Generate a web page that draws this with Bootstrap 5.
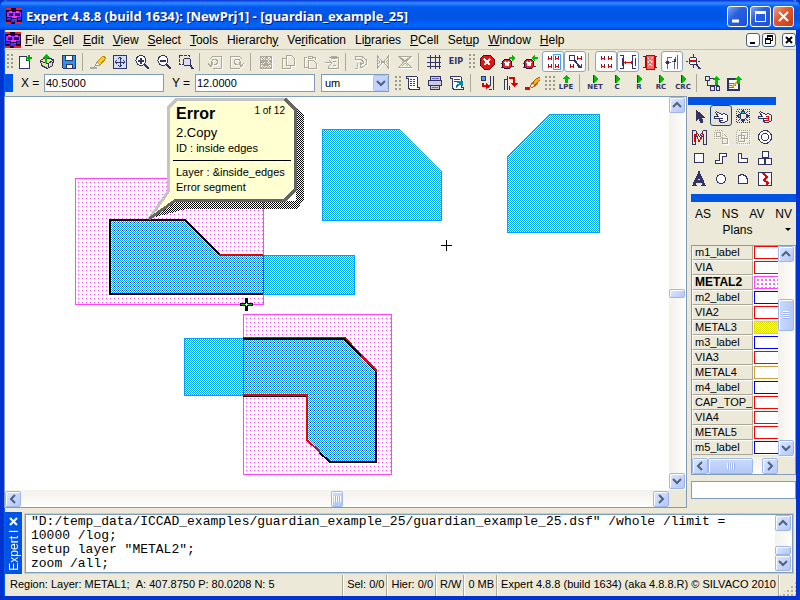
<!DOCTYPE html>
<html lang="en">
<head>
<meta charset="utf-8">
<meta name="viewport" content="width=device-width, initial-scale=1">
<title>Expert 4.8.8 (build 1634): [NewPrj1] - [guardian_example_25]</title>
<link href="https://cdn.jsdelivr.net/npm/bootstrap@5.3.0/dist/css/bootstrap.min.css" rel="stylesheet">
<style>
:root { --face:#ece9d8; --edge:#7f9db9; --shade:#aca899; --xp:#0054e3; --ink:#333366; }
body { font-family:"Liberation Sans",Arial,sans-serif; font-size:12px; line-height:14px; color:#000; background:#0046d5; }
.app { min-height:100vh; background:var(--face); border:solid #0033d0; border-width:0 4px 4px; box-shadow:inset 1px 0 #0a5cf0; }
button { color:inherit; }
.titlebar { height:30px; margin:0 -4px; padding:2px 6px 0; background:linear-gradient(#0831d9 0,#2f8cff 3px,#0058ee 7px,#0054e3 60%,#0066ff 86%,#0058ee 93%,#003dd7 100%); border-radius:7px 7px 0 0; color:#fff; }
.titlebar h1 { font:bold 13px/18px "Noto Sans","Open Sans",sans-serif; margin:0; text-shadow:1px 1px #0a1883; white-space:nowrap; }
.winbtns { gap:2px; }
.winbtn { width:21px; height:21px; padding:0; border:1px solid #fff; border-radius:3px; background:linear-gradient(135deg,#7aa4f8,#2a5fe0 40%,#1c50d8); display:block; }
.winbtn.quit { background:linear-gradient(135deg,#f0a088,#e25a30 40%,#c83c10); }
.winbtn svg { display:block; width:19px; height:19px; }
.menus { height:20px; padding-left:1px; border-bottom:1px solid #c5c2b0; }
.menus .nav { gap:9px; }
.menus .nav-link { padding:0; color:#000; }
.mdi { width:14px; height:14px; padding:0; border:1px solid #4d6185; border-radius:3px; background:#fff; display:block; }
.mdi svg { display:block; width:12px; height:12px; }
.bar { height:23px; padding-left:1px; }
.bar.low { padding-bottom:3px; }
.tool { width:22px; height:21px; padding:0; border:1px solid transparent; border-radius:3px; background:none; display:flex; align-items:center; justify-content:center; flex:none; }
.tool.on { background:#fff; border-color:#8aa5c0; }
.tool svg, .ic { width:16px; height:16px; fill:none; stroke:var(--ink); stroke-width:1; shape-rendering:crispEdges; flex:none; }
.tool.dim svg { stroke:var(--shade); filter:drop-shadow(1px 1px #fff); }
.tool b { font:bold 7px/7px "DejaVu Sans",sans-serif; color:var(--ink); }
.tool b.eip { font-size:8px; }
.tool.cap { flex-direction:column; }
.tool.cap svg { width:9px; height:9px; }
.sep { width:7px; height:18px; background:linear-gradient(var(--shade),var(--shade)) 2px 0/1px 100% no-repeat; flex:none; }
.sep.w9 { width:9px; }
.grip { width:9px; height:15px; flex:none; background:radial-gradient(circle at 1px 1px,#9d9a8a 1px,transparent 1px) 2px 0/4px 4px; }
.grip.w12 { width:12px; }
.dock { width:8px; height:18px; background:var(--xp); flex:none; }
.fld { height:18px; border:1px solid var(--edge); background:#fff; padding:0 1px; font-size:11px; line-height:14px; border-radius:0; color:#000; }
.coord { width:120px; }
.axis { width:23px; }
.unit { width:68px; padding-left:3px; appearance:none; background:#fff; }
.unitwrap { position:relative; margin-left:6px; }
.unitwrap svg { position:absolute; right:1px; top:1px; width:15px; height:16px; pointer-events:none; }
.frame { border:1px solid var(--edge); display:grid; }
.view { grid-template:minmax(0,1fr) 17px / minmax(0,1fr) 17px; background:var(--face); }
.sheet { background:#fff; position:relative; overflow:hidden; }
.sheet > svg { display:block; width:100%; height:100%; position:absolute; left:0; top:0; shape-rendering:crispEdges; }
.sb { display:flex; background:linear-gradient(90deg,#f3f1ec,#fefefb); }
.sb.v { flex-direction:column; padding:0 1px 1px 0; }
.sb.h { background:linear-gradient(#f3f1ec,#fefefb); padding:1px 0 0; }
.sb button, .thumb { width:16px; height:16px; flex:none; border:1px solid #9db7ea; border-radius:2px; background:linear-gradient(135deg,#dce7ff,#b4c8f6); box-shadow:inset 1px 1px #fff; padding:0; display:block; }
.sb button svg { display:block; width:14px; height:14px; fill:none; stroke:#4d6185; stroke-width:2; }
.thumb.v9 { height:9px; }
.thumb.h12 { width:12px; background:repeating-linear-gradient(90deg,#fff 0 1px,#9cb4ee 1px 2px) 2px 4px/7px 6px no-repeat,linear-gradient(#cbdafd,#b4c8f6); }
.thumb.long { flex:5 1 0; background:repeating-linear-gradient(90deg,#fff 0 1px,#9cb4ee 1px 2px) center/8px 6px no-repeat,linear-gradient(#cbdafd,#b4c8f6); }
.thumb.v32 { height:32px; background:repeating-linear-gradient(#fff 0 1px,#9cb4ee 1px 2px) center/6px 8px no-repeat,linear-gradient(90deg,#cbdafd,#b4c8f6); }
.grow1 { flex:1 1 0; } .grow3 { flex:3 1 0; }
.note { position:absolute; left:162px; top:1px; width:128px; height:103px; padding:6px 4px 0 9px; color:#000; font-size:11px; line-height:15px; }
.note h2 { font-size:16px; line-height:20px; font-weight:bold; margin:0; }
.note .copy { font-size:13px; line-height:17px; }
.note .count { font-size:10px; line-height:14px; padding-right:6px; }
.note hr { margin:4px 0 4px -3px; border-top:1px solid #000; opacity:1; }
.side { width:109px; flex:none; padding:1px 0 0 1px; }
.lower { padding:5px 0 0 3px; }
.strip { height:8px; background:var(--xp); }
.strip.short { width:88px; }
.tools4 { display:grid; grid-template-columns:repeat(4,22px); }
.tools4 .on { border-color:#1c4a78; background:#e4e2d8; }
.flat { border:0; padding:0; background:none; font-size:12px; line-height:16px; }
.layers { grid-template:minmax(0,1fr) 17px / minmax(0,1fr) 17px; height:230px; margin-top:7px; background:var(--face); }
.layerbox { overflow:hidden; }
.layerbox table { width:100%; margin-top:-1px; table-layout:fixed; border-collapse:separate; border-spacing:0; font-size:11px; line-height:13px; }
.layerbox th { width:61px; height:15px; padding:0 0 0 2px; font-weight:normal; border:1px solid; border-color:#fff var(--shade) var(--shade) #fff; overflow:hidden; white-space:nowrap; }
.layerbox th.cur { font-weight:bold; font-size:12px; }
.layerbox td { height:15px; padding:1px 0 1px 1px; background:#fff; }
.swatch { display:block; height:13px; border:1px solid red; border-right:0; background:#fff; }
.swatch.bl { border-color:#00f; }
.swatch.or { border-color:#d0a040; }
.swatch.mg { border-color:#f4f; background:conic-gradient(#fff 75%,#f6f 0) 0 0/4px 4px; background:linear-gradient(#f6f,#f6f) 0 0/0 0,radial-gradient(circle at 1px 1px,#f6f 1px,#fff 1px) 2px 2px/4px 4px; }
.swatch.ye { border-color:#dddd00; background:repeating-conic-gradient(#dddd00 0 25%,#fff 0 50%) 0 0/2px 2px; }
.find { margin-top:6px; }
.console { height:67px; padding:4px 3px 1px 1px; }
.ctab { width:17px; background:var(--xp); color:#fff; font-size:12px; }
.ctab span { writing-mode:vertical-rl; transform:rotate(180deg); }
.ctab button { border:0; background:none; padding:0; width:17px; height:18px; color:#fff; display:flex; align-items:center; justify-content:center; }
.cbox { border:1px solid var(--edge); outline:1px solid #cfccbb; background:#fff; margin:2px 0 1px 3px; }
.cbox textarea { border:0; resize:none; overflow:hidden; padding:0 0 0 5px; font:13px/14px "Liberation Mono",monospace; color:#000; background:#fff; display:block; outline:0; }
.status { height:21px; font-size:11px; line-height:19px; padding-left:6px; white-space:nowrap; }
.status .pane { border-right:1px solid var(--shade); box-shadow:1px 0 #fff; padding:0 2px 0 4px; }
.sizer { width:17px; height:14px; background:radial-gradient(circle at 1px 1px,#b0ad9c 1px,transparent 1px) 0 0/4px 4px; clip-path:polygon(100% 0,100% 100%,0 100%); }
</style>
<script src="https://cdn.jsdelivr.net/npm/bootstrap@5.3.0/dist/js/bootstrap.bundle.min.js"></script>
</head>
<body>
<svg width="0" height="0" class="position-absolute" aria-hidden="true">
  <defs>
    <symbol id="app" viewBox="0 0 16 16"><rect width="16" height="16" fill="#203" stroke="none"/><path d="M0 1h5M10 1h6M0 15h5M9 15h7" stroke="#e22" stroke-width="2"/><path d="M1 4h14v5H1z" fill="#a3f" stroke="none"/><path d="M3 5h4v3H3zM9 5h5v3H9z" fill="#20106a" stroke="none"/><path d="M3 4h3M10 4h3M6 9h5" stroke="#f3e" stroke-width="2"/><path d="M1 11h4M12 11h3M5 13h6" stroke="#33f" stroke-width="2"/><path d="M6 11h5" stroke="#e22"/></symbol>
    <symbol id="up" viewBox="0 0 14 14"><path d="M3 9l4-4 4 4"/></symbol>
    <symbol id="down" viewBox="0 0 14 14"><path d="M3 5l4 4 4-4"/></symbol>
    <symbol id="left" viewBox="0 0 14 14"><path d="M9 3L5 7l4 4"/></symbol>
    <symbol id="right" viewBox="0 0 14 14"><path d="M5 3l4 4-4 4"/></symbol>
    <symbol id="play" viewBox="0 0 9 9"><path d="M2 0v8h1l4-4-4-4z" fill="#0b0" stroke="none"/><path d="M2.500 0v8"/></symbol>
    <symbol id="devs" viewBox="0 0 16 16"><path d="M3.500 2v4M6.500 2v4M10.500 2v4M13.500 2v4M3.500 10v4M6.500 10v4M10.500 10v4M13.500 10v4"/><path d="M3 4.500h4M10 4.500h4M3 12.500h4M10 12.500h4" stroke="#e00"/></symbol>
    <symbol id="hand" viewBox="0 0 16 16"><path d="M1.500 8.500h4l-3-4 1-1 5 3 3-1 3 2v5l-3 2H8l-2-2v-2H2z" fill="#fff"/><path d="M7 10.500h3M7 12.500h3"/></symbol>
    <symbol id="errx" viewBox="0 0 16 16"><path d="M3.500 5.500h5l2 2v5l-2 2h-5l-2-2v-5z" fill="#e22" stroke="#203"/><path d="M4 8l4 4M8 8l-4 4" stroke="#fff" stroke-width="2"/><path d="M0 9.500h2M0 13.500h2M10 12.500h3"/></symbol>
  </defs>
</svg>

<div class="app d-flex flex-column">
  <header class="titlebar d-flex align-items-center flex-shrink-0">
    <svg class="ic"><use href="#app"/></svg>
    <h1 class="flex-grow-1 ps-1">Expert 4.8.8 (build 1634): [NewPrj1] - [guardian_example_25]</h1>
    <div class="winbtns d-flex">
      <button class="winbtn" aria-label="Minimize"><svg><path d="M4 14h7" stroke="#fff" stroke-width="3"/></svg></button>
      <button class="winbtn" aria-label="Maximize"><svg><path d="M4 5.500h11M4.500 6v9M14.500 6v9M4 14.500h11M4 4.500h11M4 6.500h11" stroke="#fff" fill="none"/></svg></button>
      <button class="winbtn quit" aria-label="Close"><svg><path d="M5 5l9 9M14 5l-9 9" stroke="#fff" stroke-width="2"/></svg></button>
    </div>
  </header>

  <nav class="menus d-flex align-items-center flex-shrink-0" aria-label="Menu">
    <svg class="ic"><use href="#app"/></svg>
    <div class="nav flex-nowrap flex-grow-1 ps-1">
      <a class="nav-link" href="#"><u>F</u>ile</a><a class="nav-link" href="#"><u>C</u>ell</a><a class="nav-link" href="#"><u>E</u>dit</a><a class="nav-link" href="#"><u>V</u>iew</a><a class="nav-link" href="#"><u>S</u>elect</a><a class="nav-link" href="#"><u>T</u>ools</a><a class="nav-link" href="#">Hierarch<u>y</u></a><a class="nav-link" href="#">Ve<u>r</u>ification</a><a class="nav-link" href="#">Li<u>b</u>raries</a><a class="nav-link" href="#"><u>P</u>Cell</a><a class="nav-link" href="#">Set<u>u</u>p</a><a class="nav-link" href="#"><u>W</u>indow</a><a class="nav-link" href="#"><u>H</u>elp</a>
    </div>
    <div class="winbtns d-flex">
      <button class="mdi" aria-label="Minimize document"><svg><path d="M3 9h5" stroke="#000" stroke-width="2"/></svg></button>
      <button class="mdi" aria-label="Restore document"><svg fill="none" stroke="#000" shape-rendering="crispEdges"><path d="M4.500 4V2.500h5v4H8M4 1.500h6M2.500 5.500h5v4h-5zM2 4.500h6"/></svg></button>
      <button class="mdi ms-1" aria-label="Close document"><svg><path d="M3 3l6 6M9 3l-6 6" stroke="#000" stroke-width="2"/></svg></button>
    </div>
  </nav>

  <div class="bar d-flex align-items-center flex-shrink-0" role="toolbar" aria-label="Standard">
    <span class="grip"></span>
    <button class="tool" aria-label="New"><svg><path d="M2.500 2.500h7v4h3v8h-10z" fill="#fff"/><path d="M9 4h6M12 1v6" stroke="#0a0" stroke-width="2"/></svg></button>
    <button class="tool" aria-label="Open"><svg><path d="M1.500 6.500l5-3 8 2-1 6-5 3-6-3z" fill="#e8dfa0"/><path d="M2 7l7 3 5-4M9 10v4"/><path d="M6 3h2v6H6zM7 0l4 4H3z" fill="#0b0" stroke="none"/></svg></button>
    <button class="tool" aria-label="Save"><svg><path d="M1.500 1.500h13v13h-12l-1-1z" fill="#29e"/><path d="M4.500 1.500h7v5h-7zM5.500 10.500h6v4h-6z" fill="#fff"/></svg></button>
    <span class="sep"></span>
    <button class="tool" aria-label="Highlight"><svg><path d="M0 13.500h7" stroke="#aaa" stroke-width="2"/><path d="M5 12l2-4 6-6 3 2-6 7z" fill="#fc3" stroke="#b80"/><path d="M5 12l2-4 3 3z" fill="#fff" stroke="#999"/></svg></button>
    <button class="tool" aria-label="Fit all"><svg><path d="M1.500 1.500h13v13h-13z" fill="#cfe0ff"/><path d="M8 3v10M3 8h10M6 5l2-2 2 2M6 11l2 2 2-2M5 6L3 8l2 2M11 6l2 2-2 2"/></svg></button>
    <button class="tool" aria-label="Zoom in"><svg><circle cx="7" cy="6.500" r="5" fill="#fff"/><path d="M11 11l4 4" stroke-width="2"/><path d="M4 6.500h6M7 4v6" stroke-width="2"/></svg></button>
    <button class="tool" aria-label="Zoom out"><svg><circle cx="7" cy="6.500" r="5" fill="#fff"/><path d="M11 11l4 4M4 7h6" stroke-width="2"/></svg></button>
    <button class="tool" aria-label="Zoom window"><svg><path d="M1.500 1.500h10v9h-10z" stroke-dasharray="3 1"/><circle cx="9" cy="8" r="4" fill="#dde"/><path d="M12 11l3 4" stroke-width="2"/></svg></button>
    <span class="sep"></span>
    <button class="tool dim" aria-label="Undo"><svg><path d="M6 2.500h8.500v12h-9M6 2L3 5M1 9l3 4 2-5M4.500 12V9c0-5 6-5 6-1 0 2-3 3-3 3"/></svg></button>
    <button class="tool dim" aria-label="Redo"><svg><path d="M10 2.500H1.500v12h9M10 2l3 3M15 9l-3 4-2-5M11.500 12V9c0-5-6-5-6-1 0 2 3 3 3 3"/></svg></button>
    <span class="sep"></span>
    <button class="tool dim" aria-label="Cut"><svg><path d="M2.500 2.500h11v12h-11zM3 3l10 11M13 3L3 14M8 3L3 8l5 6 5-6zM5 3l8 8M3 6l8 8M10 3L3 11M13 6l-8 8"/></svg></button>
    <button class="tool dim" aria-label="Copy"><svg><path d="M6.500 1.500h5l3 3v7h-8zM6 4.500H2.500v10h8V12"/></svg></button>
    <button class="tool dim" aria-label="Paste"><svg><path d="M5 3.500H2.500v10h4M6 2.500h4v2H6zM11 3.500h2.500V6M6.500 6.500h5l3 3v5h-8z"/></svg></button>
    <button class="tool dim" aria-label="Paste special"><svg><path d="M5 3.500h9.500v11h-10V12M7 2.500h5v2H7zM1 8.500h7M5 6l3 3-3 3M9 7h3M9 11h3"/></svg></button>
    <span class="sep"></span>
    <button class="tool dim" aria-label="Rotate"><svg><path d="M2 2.500h7l4 3v5l-4 3H7M2 5.500h6l2 2v2l-3 1M2 2v4M7 8v5M4 9v4M2 14h3"/></svg></button>
    <button class="tool dim" aria-label="Mirror horizontally"><svg><path d="M2.500 2v12l5-6zM13.500 2v12l-5-6zM2 5l3 3M2 11l3-3M14 5l-3 3M14 11l-3-3"/></svg></button>
    <button class="tool dim" aria-label="Mirror vertically"><svg><path d="M2 2.500h12l-5 5 5 6H2l5-6zM5 4l3 3 3-3M5 12l3-3 3 3"/></svg></button>
    <span class="sep"></span>
    <button class="tool" aria-label="Grid"><svg><path d="M4.500 1v14M9.500 1v14M13.500 1v14M1 3.500h14M1 8.500h14M1 12.500h14"/></svg></button>
    <button class="tool" aria-label="Edit in place"><b class="eip">EIP</b></button>
    <span class="grip"></span>
    <button class="tool" aria-label="Stop"><svg><path d="M5 1h6l4 4v6l-4 4H5l-4-4V5z" fill="#e11" stroke="#511"/><path d="M5 5l6 6M11 5l-6 6" stroke="#fff" stroke-width="2"/></svg></button>
    <button class="tool" aria-label="Next error"><svg><use href="#errx" width="16" height="16"/><path d="M8 3h3V1l4 3-4 3V5H8z" fill="#0b0" stroke="none"/></svg></button>
    <button class="tool" aria-label="Previous error"><svg><use href="#errx" width="16" height="16"/><path d="M15 3h-3V1L8 4l4 3V5h3z" fill="#0b0" stroke="none"/></svg></button>
    <button class="tool on" aria-label="Device pairs"><svg><use href="#devs" width="16" height="16"/><path d="M8.500.500h7v15h-7z" stroke="#3af"/></svg></button>
    <button class="tool on" aria-label="Find device"><svg><circle cx="5" cy="4" r="3"/><path d="M7 6l6 7" stroke-width="2"/><path d="M10.500 2v4M14.500 2v4M3.500 10v4M6.500 10v4M14.500 10v4"/><path d="M11 4.500h3M3 12.500h3M11 13.500h4" stroke="#e00"/></svg></button>
    <span class="sep w9"></span>
    <button class="tool on" aria-label="Devices"><svg><use href="#devs" width="16" height="16"/></svg></button>
    <button class="tool on" aria-label="Spacing"><svg><path d="M0 1.500h3.500v13H0M2 4v8M16 1.500h-3.500v13H16M15 4v8"/><path d="M4 8.500h8M5 7v3M11 7v3" stroke="#e00"/></svg></button>
    <button class="tool" aria-label="Resistor"><svg><path d="M1 2.500h14M1 13.500h14M3 2v12M13 2v12"/><path d="M4 1h8v14H4z" fill="#f66" stroke="#c00"/><path d="M5 3l6 6M5 7l6 6M11 3L5 9M11 7l-6 6" stroke="#fff" stroke-dasharray="1 1"/></svg></button>
    <button class="tool on" aria-label="Routes"><svg><path d="M3.500 15V3.500H8M1 8.500h6M10.500 15V7.500H8M13.500 1v14M11 3v4" stroke="#668"/><path d="M10 5h2v3h-2zM2 7h3v3H2z" fill="#336" stroke="none"/></svg></button>
    <button class="tool" aria-label="Locate"><svg><circle cx="7" cy="7" r="4" fill="#fff"/><path d="M10 10l4 5" stroke-width="2"/><path d="M7 0v3M0 7h2M12 7h2M7 11v3"/><path d="M4 7h6" stroke="#e00" stroke-width="2"/></svg></button>
  </div>

  <div class="bar low d-flex align-items-center flex-shrink-0" role="toolbar" aria-label="Coordinates">
    <span class="dock"></span>
    <label for="cx" class="axis ms-2">X =</label>
    <input id="cx" class="fld coord" type="text" value="40.5000">
    <label for="cy" class="axis ms-2">Y =</label>
    <input id="cy" class="fld coord" type="text" value="12.0000">
    <span class="unitwrap d-flex"><select class="fld unit" aria-label="Units"><option>um</option><option>nm</option></select>
      <svg viewBox="0 0 15 16"><rect x=".5" y=".5" width="14" height="15" rx="1" fill="#c3d3fd" stroke="#b0c4f4"/><path d="M4 6l4 4 4-4" fill="none" stroke="#4d6185" stroke-width="2"/></svg></span>
    <span class="grip ms-1"></span>
    <button class="tool" aria-label="Script"><svg><path d="M1.500 1.500h10l1 1v10h2v2h-10l-1-2v-9h-2z" fill="#fff"/><path d="M5 4.500h6M5 6.500h6M5 8.500h6M5 10.500h6" stroke="#33d" stroke-dasharray="2 1"/></svg></button>
    <button class="tool" aria-label="Print"><svg><path d="M3.500 5V1.500h10V5M1.500 5.500h13v5h-13zM3.500 10v4.500h9V10" fill="#ccd"/><path d="M5 3.500h7M5 12.500h6" stroke="#66d"/></svg></button>
    <button class="tool" aria-label="Reload script"><svg><path d="M1.500 1.500h10l1 1v10h2v2h-10l-1-2v-9h-2z" fill="#fff"/><path d="M5 4.500h6M5 6.500h3" stroke="#33d"/><path d="M7 12l6-5M8 7h5v4" stroke="#08a" stroke-width="2"/></svg></button>
    <span class="sep w9"></span>
    <button class="tool" aria-label="Probe net"><svg><path d="M1.500 1.500h4v4h-4z" fill="#3ae"/><path d="M10.500 1v9l-3 3M13.500 1v14M9 14h3"/><path d="M2 8h2v2h2V8l3 3-3 3v-2H2z" fill="#d00" stroke="none"/></svg></button>
    <button class="tool" aria-label="Trace net"><svg><path d="M2.500 15V5M5.500 15V1M2 4h4M7.500 15v-4"/><path d="M7 2h6v6h3l-4 4-4-4h3V4H7z" fill="#d00" stroke="none"/></svg></button>
    <button class="tool" aria-label="Erase marks"><svg><path d="M1 13h5" stroke="#e00" stroke-width="3"/><path d="M6 11l6-7 4-2v3l-6 7z" fill="#fa3" stroke="#a60"/><path d="M6 11l3-3 2 2-3 3z" fill="#fdd" stroke="#a60"/></svg></button>
    <span class="grip w12"></span>
    <button class="tool cap" aria-label="LPE"><svg viewBox="0 0 9 9"><path d="M4 0l4 4H6v4H3V4H0z" fill="#0b0" stroke="none"/></svg><b>LPE</b></button>
    <span class="sep"></span>
    <button class="tool cap"><svg><use href="#play"/></svg><b>NET</b></button>
    <button class="tool cap"><svg><use href="#play"/></svg><b>C</b></button>
    <button class="tool cap"><svg><use href="#play"/></svg><b>R</b></button>
    <button class="tool cap"><svg><use href="#play"/></svg><b>RC</b></button>
    <button class="tool cap"><svg><use href="#play"/></svg><b>CRC</b></button>
    <span class="sep"></span>
    <button class="tool" aria-label="Export hierarchy"><svg><path d="M1.500 1.500h4v4h-4zM6.500 11.500h4v4h-4zM12.500 11.500h3v4h-3zM3.500 6v4h4v2M6 3.500h4M8 10h6v2"/><path d="M12 1l4 4h-2v5h-3V5H8z" fill="#0b0" stroke="none"/></svg></button>
    <button class="tool" aria-label="Export report"><svg><path d="M1.500 3.500h11v11h-11z" fill="#fff" stroke-width="2"/><path d="M3 8h6M3 10h7M3 12h5" stroke="#28d"/><path d="M6 12l6-6" stroke="#fa0" stroke-width="2"/><path d="M12 1l4 4h-2v4h-3V5H8z" fill="#0b0" stroke="none"/></svg></button>
  </div>

  <main class="d-flex flex-grow-1">
    <section class="frame view flex-grow-1" aria-label="Layout view">
      <div class="sheet">
        <svg aria-label="Layout drawing">
          <defs>
            <pattern id="chk" width="4" height="4" patternUnits="userSpaceOnUse"><rect width="4" height="4" fill="#fff"/><g fill="#00a0ff" stroke="none"><rect width="1" height="1"/><rect x="2" width="1" height="1"/><rect x="1" y="1" width="1" height="1"/><rect x="3" y="1" width="1" height="1"/><rect y="2" width="1" height="1"/><rect x="2" y="2" width="1" height="1"/><rect x="1" y="3" width="1" height="1"/><rect x="3" y="3" width="1" height="1"/></g></pattern>
            <pattern id="dots" width="4" height="4" patternUnits="userSpaceOnUse"><rect x="2" y="2" width="1" height="1" fill="#f4f"/></pattern>
            <pattern id="bdots" width="4" height="4" patternUnits="userSpaceOnUse"><rect x="2" y="2" width="1" height="1" fill="#0000c8"/></pattern>
            <pattern id="shade" width="2" height="2" patternUnits="userSpaceOnUse"><rect width="1" height="1"/><rect x="1" y="1" width="1" height="1"/></pattern>
          </defs>
          <g transform="translate(-5 -97)" fill="none">
            <g fill="url(#chk)" stroke="#00a0ff">
              <path d="M322.500 129.500h77l42 42v49h-119z"/>
              <path d="M507.500 156.500l42-42h50v118h-92z"/>
              <path d="M110.500 220.500h74l35 35h135v39h-244z"/>
              <path d="M184.500 338.500h160l32 33v91h-46l-23-22v-45h-123z"/>
            </g>
            <g stroke="#f4f" fill="url(#dots)">
              <path d="M75.500 178.500h188v126h-188z"/>
              <path d="M243.500 314.500h148v160h-148z"/>
            </g>
            <path d="M110.500 220.500h74l35 35h44v39h-153zM243.500 338.500h101l32 33v91h-46l-23-22v-45h-64z" fill="url(#bdots)"/>
            <path d="M263.500 255v39M243.500 338v57" stroke="#63f"/>
            <g stroke="#e00">
              <path d="M109 219.500h76l35 35M243 337.500h102l32 33M308 394.500h-65"/>
            </g>
            <g stroke="#000" stroke-width="2">
              <path d="M263 294h-153v-74h75l35 35M243 339h101l32 32v91h-46l-11-10M243 396h64"/>
            </g>
            <g stroke="#e00" stroke-width="2">
              <path d="M219 255h44M361 356l16 15M243 395h64v45l13 12"/>
            </g>
            <path d="M441 245.500h11M446.500 240v11" stroke="#000"/>
            <path d="M240 304.500h13M246.500 298v13" stroke="#000" stroke-width="3"/>
            <path d="M241 304.500h4M248 304.500h4" stroke="#0b0"/><path d="M245 304.500h3M246.500 303v3" stroke="#fff"/>
            <path d="M296 106l8 10v84l-7 9H186l-38 10 30-18h118z" fill="url(#shade)"/>
            <path d="M176 99h109l10 10v81l-10 10H177l-28 19 19-27V107z" fill="#ffffd2"/>
            <path d="M149 219l19-27v-84l9-9h108" stroke="#c4c4c4" stroke-width="3"/>
            <path d="M285 99l10 10v81l-10 10H176l-27 19" stroke="#666" stroke-width="3"/>
          </g>
        </svg>
        <div class="note">
          <div class="d-flex justify-content-between"><h2>Error</h2><span class="count">1 of 12</span></div>
          <div class="copy">2.Copy</div>
          <div>ID : inside edges</div>
          <hr>
          <div>Layer : &amp;inside_edges</div>
          <div>Error segment</div>
        </div>
      </div>
      <div class="sb v">
        <button aria-label="Scroll up"><svg><use href="#up"/></svg></button><i class="grow1"></i><span class="thumb v9"></span><i class="grow1"></i><button aria-label="Scroll down"><svg><use href="#down"/></svg></button>
      </div>
      <div class="sb h">
        <button aria-label="Scroll left"><svg><use href="#left"/></svg></button><i class="grow1"></i><span class="thumb h12"></span><i class="grow1"></i><button aria-label="Scroll right"><svg><use href="#right"/></svg></button>
      </div>
    </section>

    <aside class="side d-flex flex-column">
      <div class="strip short"></div>
      <div class="tools4" role="toolbar" aria-label="Drawing tools">
        <button class="tool" aria-label="Select"><svg><path d="M5 2v11l3-3 2 5 2-1-2-5h3z" fill="#336"/></svg></button>
        <button class="tool on" aria-label="Point"><svg><use href="#hand" width="16" height="16"/></svg></button>
        <button class="tool" aria-label="Move"><svg><path d="M1.500 1.500h13v13h-13z" stroke-dasharray="1 1"/><path d="M8 2l2 3H6zM8 14l2-3H6zM2 8l3-2v4zM14 8l-3-2v4z" fill="#0dd"/><path d="M3 3l3 3M13 3l-3 3M3 13l3-3M13 13l-3-3"/></svg></button>
        <button class="tool" aria-label="Point error"><svg><use href="#hand" width="16" height="16"/><path d="M9 8.500h3M11.500 8v5M9 10.500h3M9 12.500h3" stroke="#e00"/></svg></button>
        <button class="tool" aria-label="Stretch"><svg><path d="M1.500 15V1.500h3l4 6 4-6h3V15h-3V6l-4 6-4-6v9z"/><path d="M5 4l3 9 4-9M3 5v8" stroke="#e00"/></svg></button>
        <button class="tool dim" aria-label="Copy shapes"><svg><path d="M1.500 1.500h8v8h-8z" stroke-dasharray="1 1"/><path d="M3 3h4v4H3zM7 7l3 3M9.500 9.500h5v5h-5zM11 5l3 3"/></svg></button>
        <button class="tool dim" aria-label="Group"><svg><path d="M1.500 1.500h13v13h-13z" stroke-dasharray="1 1"/><path d="M6.500 3.500h6v6h-6zM3.500 6.500h6v6h-6z"/></svg></button>
        <button class="tool" aria-label="Ring"><svg shape-rendering="auto"><circle cx="8" cy="8" r="6.500" fill="#fff"/><circle cx="8" cy="8" r="3.500"/></svg></button>
        <button class="tool" aria-label="Box"><svg><path d="M3.500 3.500h9v9h-9z" fill="#fff"/></svg></button>
        <button class="tool" aria-label="Path"><svg><path d="M2.500 10.500h4v-7h7v3h-4v7h-7z" fill="#fff"/></svg></button>
        <button class="tool" aria-label="Polygon"><svg><path d="M3.500 3.500h3v5h6v4h-9z" fill="#fff"/></svg></button>
        <button class="tool" aria-label="Instance"><svg><path d="M5.500 1.500h6v6h-6zM1.500 8.500h6v6h-6zM8.500 8.500h6v6h-6z" fill="#fff"/></svg></button>
        <button class="tool" aria-label="Text"><svg><path d="M3 14L8 3l5 11M5 10h6" stroke-width="3"/><path d="M1 14.500h5M10 14.500h5"/></svg></button>
        <button class="tool" aria-label="Circle"><svg><circle cx="8" cy="8" r="4.500" fill="#fff"/></svg></button>
        <button class="tool" aria-label="Arc"><svg><path d="M3.500 12.500V5l3-1.500 4 1 2 4v4z" fill="#fff"/></svg></button>
        <button class="tool" aria-label="Break"><svg><path d="M1.500 1.500h13v13h-13z" fill="#fff"/><path d="M6 2l4 4-3 3 4 3-2 2" stroke="#e00" stroke-width="2"/></svg></button>
      </div>
      <div class="lower">
        <div class="strip"></div>
        <div class="d-flex justify-content-between px-1 pt-1">
          <button class="flat">AS</button><button class="flat">NS</button><button class="flat">AV</button><button class="flat">NV</button>
        </div>
        <button class="flat d-flex w-100 align-items-center pe-1"><span class="flex-grow-1">Plans</span><svg width="8" height="4"><path d="M1 0h6L4 3z"/></svg></button>
        <div class="frame layers">
          <div class="layerbox">
            <table>
              <tbody>
                <tr><th scope="row">m1_label</th><td><i class="swatch"></i></td></tr>
                <tr><th scope="row">VIA</th><td><i class="swatch"></i></td></tr>
                <tr><th scope="row" class="cur">METAL2</th><td><i class="swatch mg"></i></td></tr>
                <tr><th scope="row">m2_label</th><td><i class="swatch bl"></i></td></tr>
                <tr><th scope="row">VIA2</th><td><i class="swatch"></i></td></tr>
                <tr><th scope="row">METAL3</th><td><i class="swatch ye"></i></td></tr>
                <tr><th scope="row">m3_label</th><td><i class="swatch bl"></i></td></tr>
                <tr><th scope="row">VIA3</th><td><i class="swatch"></i></td></tr>
                <tr><th scope="row">METAL4</th><td><i class="swatch or"></i></td></tr>
                <tr><th scope="row">m4_label</th><td><i class="swatch bl"></i></td></tr>
                <tr><th scope="row">CAP_TOP_M</th><td><i class="swatch"></i></td></tr>
                <tr><th scope="row">VIA4</th><td><i class="swatch"></i></td></tr>
                <tr><th scope="row">METAL5</th><td><i class="swatch"></i></td></tr>
                <tr><th scope="row">m5_label</th><td><i class="swatch bl"></i></td></tr>
              </tbody>
            </table>
          </div>
          <div class="sb v">
            <button aria-label="Layers up"><svg><use href="#up"/></svg></button><i class="grow1"></i><span class="thumb v32"></span><i class="grow3"></i><button aria-label="Layers down"><svg><use href="#down"/></svg></button>
          </div>
          <div class="sb h">
            <button aria-label="Layers left"><svg><use href="#left"/></svg></button><span class="thumb long"></span><i class="grow1"></i><button aria-label="Layers right"><svg><use href="#right"/></svg></button>
          </div>
        </div>
        <input class="fld find w-100" type="text" aria-label="Layer filter">
      </div>
    </aside>
  </main>

  <section class="console d-flex flex-shrink-0" aria-label="Console">
    <div class="ctab d-flex flex-column align-items-center">
      <button aria-label="Close console"><svg width="9" height="9"><path d="M1 1l7 7M8 1L1 8" stroke="#fff" stroke-width="2"/></svg></button>
      <span>Expert l</span>
    </div>
    <div class="cbox d-flex flex-grow-1">
      <textarea class="flex-grow-1" aria-label="Command log">"D:/temp_data/ICCAD_examples/guardian_example_25/guardian_example_25.dsf" /whole /limit =
10000 /log;
setup layer "METAL2";
zoom /all;</textarea>
      <div class="sb v">
        <button aria-label="Log up"><svg><use href="#up"/></svg></button><i class="grow1"></i><span class="thumb v9"></span><button aria-label="Log down"><svg><use href="#down"/></svg></button>
      </div>
    </div>
  </section>

  <footer class="status d-flex flex-shrink-0">
    <span class="pane flex-grow-1 ps-0">Region: Layer: METAL1; &nbsp;A: 407.8750 P: 80.0208 N: 5</span>
    <span class="pane">Sel: 0/0</span><span class="pane">Hier: 0/0</span><span class="pane">R/W</span><span class="pane">0 MB</span>
    <span class="pane">Expert 4.8.8 (build 1634) (aka 4.8.8.R) © SILVACO 2010</span>
    <span class="sizer align-self-end"></span>
  </footer>
</div>
</body>
</html>
